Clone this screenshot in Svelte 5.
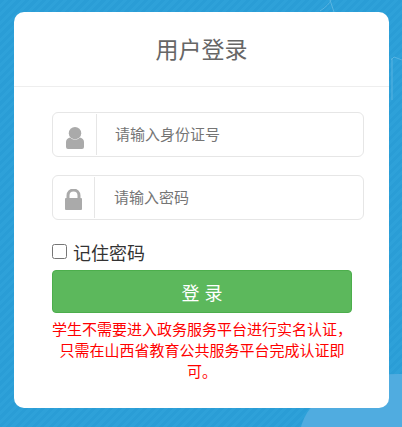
<script>
  let remember = $state(false);
</script>

<div class="page">
  <svg class="deco" viewBox="0 0 402 427" aria-hidden="true">
    <path d="M320 11 Q329 5 331 0 M330 0 L334 12 M391 60 L394 57 L402 60 M392 58 L392 100" fill="none" stroke="#58b4e2" stroke-width="1"/>
    <ellipse cx="398" cy="436" rx="98" ry="62" fill="#50ace0"/>
  </svg>
  <main class="card">
    <h1 class="title">用户登录</h1>
    <form class="form">
      <div class="field user">
        <span class="addon">
          <svg class="person" width="18" height="22" viewBox="0 0 18 22"><circle cx="9" cy="6.200" r="6.200" fill="#aaa"/><path d="M0 20 V15 Q0 11.500 4 10.500 Q9 15 14 10.500 Q18 11.500 18 15 V20 Q18 22 16 22 H2 Q0 22 0 20Z" fill="#aaa"/></svg>
        </span>
        <input placeholder="请输入身份证号" />
      </div>
      <div class="field pass">
        <span class="addon">
          <svg class="lock" width="17" height="21" viewBox="0 0 17 21"><path d="M3 10 V6.500 A5.500 5.500 0 0 1 14 6.500 V10" fill="none" stroke="#aaa" stroke-width="3"/><rect x="0" y="9" width="17" height="12" rx="1" fill="#aaa"/></svg>
        </span>
        <input placeholder="请输入密码" type="text" />
      </div>
      <label class="remember"><input type="checkbox" bind:checked={remember} /><span>记住密码</span></label>
      <button type="button" class="login">登 录</button>
      <p class="note">学生不需要进入政务服务平台进行实名认证，只需在山西省教育公共服务平台完成认证即可。</p>
    </form>
  </main>
</div>

<style>
  :global(body) { margin: 0; }
  .page {
    position: relative;
    box-sizing: border-box;
    width: 402px;
    height: 427px;
    padding: 12px 13px 19px 14px;
    overflow: hidden;
    background-color: #2a9ed7;
    background-image: repeating-linear-gradient(135deg, #2a9dd6 0 3px, #2ea1d9 3px 6px);
    font-family: "Liberation Sans", "Noto Sans CJK SC", sans-serif;
  }
  .deco { position: absolute; inset: 0; width: 402px; height: 427px; }
  .card {
    position: relative;
    height: 396px;
    background: #fff;
    border-radius: 10px;
  }
  .title {
    margin: 0;
    height: 74px;
    line-height: 76px;
    border-bottom: 1px solid #eee;
    text-align: center;
    font-size: 23px;
    font-weight: 400;
    color: #666;
  }
  .form { display: flex; flex-direction: column; align-items: flex-start; padding: 25px 25px 0 38px; }
  .field {
    display: flex;
    align-self: stretch;
    box-sizing: border-box;
    height: 45px;
    border: 1px solid #e6e6e6;
    border-radius: 6px;
  }
  .pass { margin-top: 18px; }
  .addon {
    display: flex;
    align-items: center;
    justify-content: center;
    box-sizing: border-box;
    border-right: 1px solid #e6e6e6;
    margin: 1px 0;
  }
  .user .addon { width: 44px; }
  .pass .addon { width: 42px; }
  .person { margin-top: 6px; }
  .lock { margin-top: 4px; }
  .field input {
    flex: 1;
    min-width: 0;
    border: 0;
    outline: 0;
    background: transparent;
    padding: 0 0 0 19px;
    font: 15px "Liberation Sans", "Noto Sans CJK SC", sans-serif;
  }
  .user input { padding-left: 18px; }
  .field input::placeholder { color: #757575; opacity: 1; }
  .remember {
    display: flex;
    align-items: center;
    height: 24px;
    margin-top: 20px;
    font-size: 18px;
    color: #333;
  }
  .remember input { width: 15px; height: 15px; margin: 0 6px 1px 0; }
  .login {
    box-sizing: border-box;
    width: 300px;
    height: 43px;
    margin-top: 6px;
    border: 1px solid #4cae4c;
    border-radius: 4px;
    background: #5cb85c;
    color: #fff;
    font: 18px "Liberation Sans", "Noto Sans CJK SC", sans-serif;
  }
  .note {
    width: 300px;
    margin: 6px 0 0;
    color: #f00;
    font-size: 15px;
    line-height: 21px;
    text-align: center;
  }
</style>
